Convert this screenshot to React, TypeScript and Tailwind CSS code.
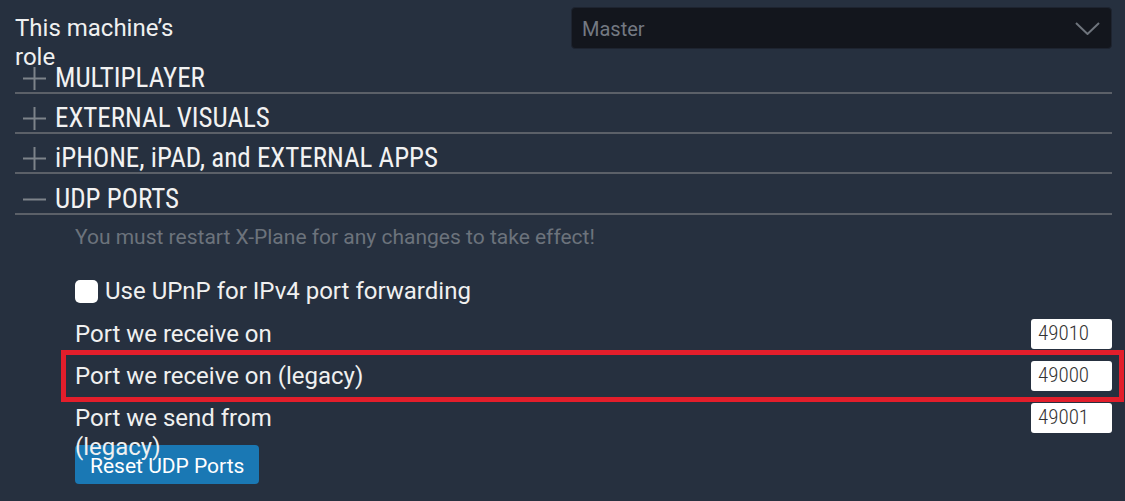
const cond = "font-['Roboto_Condensed','Liberation_Sans_Narrow','DejaVu_Sans_Condensed',sans-serif]";

function PlusMinus({ open }: { open: boolean }) {
  return (
    <svg width="23" height="23" viewBox="0 0 23 23" className="shrink-0">
      <line x1="0" y1="11.5" x2="23" y2="11.5" stroke="#7d838a" strokeWidth="2" />
      {!open && <line x1="11.5" y1="0" x2="11.5" y2="23" stroke="#7d838a" strokeWidth="2" />}
    </svg>
  );
}

function SectionHeader({ title, open = false, tall = false }: { title: string; open?: boolean; tall?: boolean }) {
  return (
    <div className={`${tall ? 'h-[41px]' : 'h-[40px]'} border-b-2 border-[#5b6068] flex items-end`}>
      <div className="flex items-center h-[27px] pl-[8px] gap-[9px]">
        <PlusMinus open={open} />
        <span className={`${cond} text-[27px] leading-[27px] text-[#f2f2f2]`}>{title}</span>
      </div>
    </div>
  );
}

function PortRow({ label, value, narrow = false }: { label: string; value: string; narrow?: boolean }) {
  return (
    <div className="h-[42px] flex items-center justify-between">
      <div className={`relative z-10 h-[29px] leading-[29px] text-[24px] text-[#f0f0f0] ${narrow ? 'w-[215px]' : ''}`}>{label}</div>
      <div className={`w-[81px] h-[30px] bg-white rounded-[3px] px-[7px] flex items-center ${cond} font-light text-[21px] text-[#333]`}>
        {value}
      </div>
    </div>
  );
}

export default function App() {
  return (
    <div className="relative w-full h-[501px] overflow-hidden bg-[#26303f] font-['Roboto',sans-serif] pl-[15px] pr-[13px]">
      {/* machine role */}
      <div className="h-[54px] flex justify-between items-start">
        <div className="relative z-10 w-[175px] pt-[14px] text-[24px] leading-[29px] text-[#f0f0f0]">This machine’s role</div>
        <div className="mt-[7px] w-[541px] h-[42px] bg-[#13161d] border border-[#1e2430] rounded-[4px] flex items-center justify-between pl-[10px] pr-[11px]">
          <span className="pt-[2px] text-[20px] text-[#737982]">Master</span>
          <svg width="25" height="13" viewBox="0 0 25 13">
            <polyline points="1,1 12.5,12 24,1" fill="none" stroke="#6e747c" strokeWidth="2" />
          </svg>
        </div>
      </div>

      <SectionHeader title="MULTIPLAYER" />
      <SectionHeader title="EXTERNAL VISUALS" />
      <SectionHeader title="iPHONE, iPAD, and EXTERNAL APPS" />
      <SectionHeader title="UDP PORTS" open tall />

      <div className="pl-[60px]">
        <div className="mt-[2px] h-[42px] flex items-center text-[21px] text-[#6c737c]">
          You must restart X-Plane for any changes to take effect!
        </div>
        <div className="h-[11px]" />
        <div className="h-[42px] flex items-center gap-[7px]">
          <div className="w-[23px] h-[23px] bg-white rounded-[5px]" />
          <span className="text-[24px] text-[#f0f0f0]">Use UPnP for IPv4 port forwarding</span>
        </div>
        <div className="h-[1px]" />
        <PortRow label="Port we receive on" value="49010" />
        <PortRow label="Port we receive on (legacy)" value="49000" />
        <PortRow label="Port we send from (legacy)" value="49001" narrow />
        <button className="mt-[6px] w-[184px] h-[39px] bg-[#1a78b4] rounded-[4px] text-[21px] leading-[21px] text-white text-left pl-[15px] pt-[4px]">
          Reset UDP Ports
        </button>
      </div>

      {/* highlight annotation */}
      <div className="absolute left-[61px] top-[350px] w-[1063px] h-[52px] border-[5px] border-[#e31e2b] pointer-events-none" />
    </div>
  );
}
